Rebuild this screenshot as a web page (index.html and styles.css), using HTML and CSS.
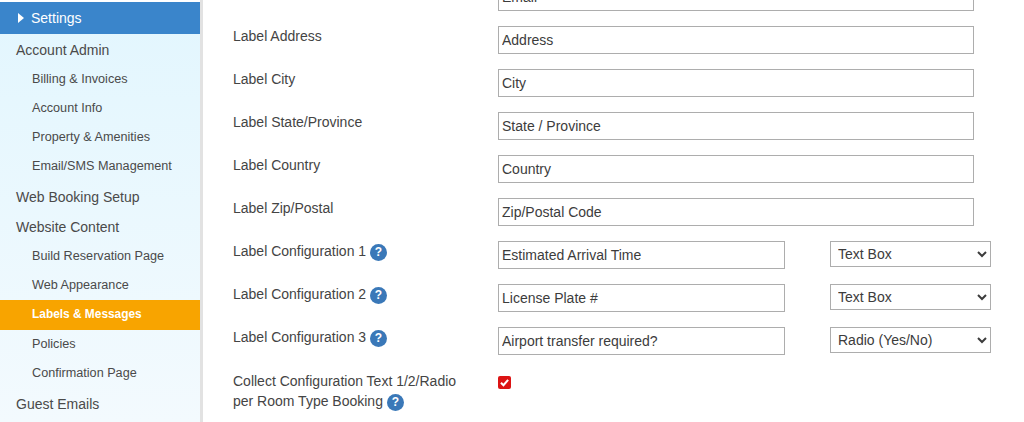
FILE: index.html
```html
<!DOCTYPE html>
<html lang="en">
<head>
<meta charset="utf-8">
<title>Labels &amp; Messages</title>
<link rel="stylesheet" href="styles.css">
</head>
<body>
<div class="page">
  <nav class="sidebar">
    <div class="nav-head"><span class="tri"></span>Settings</div>
    <div class="nav-top">Account Admin</div>
    <div class="nav-sub">Billing &amp; Invoices</div>
    <div class="nav-sub">Account Info</div>
    <div class="nav-sub">Property &amp; Amenities</div>
    <div class="nav-sub">Email/SMS Management</div>
    <div class="nav-top">Web Booking Setup</div>
    <div class="nav-top">Website Content</div>
    <div class="nav-sub">Build Reservation Page</div>
    <div class="nav-sub">Web Appearance</div>
    <div class="nav-sub active">Labels &amp; Messages</div>
    <div class="nav-sub">Policies</div>
    <div class="nav-sub">Confirmation Page</div>
    <div class="nav-top">Guest Emails</div>
  </nav>
  <main class="form">
    <div class="row"><label class="lbl">Label Email</label><input class="txt" value="Email"></div>
    <div class="row"><label class="lbl">Label Address</label><input class="txt" value="Address"></div>
    <div class="row"><label class="lbl">Label City</label><input class="txt" value="City"></div>
    <div class="row"><label class="lbl">Label State/Province</label><input class="txt" value="State / Province"></div>
    <div class="row"><label class="lbl">Label Country</label><input class="txt" value="Country"></div>
    <div class="row"><label class="lbl">Label Zip/Postal</label><input class="txt" value="Zip/Postal Code"></div>
    <div class="row"><label class="lbl">Label Configuration 1 <span class="help">?</span></label><input class="txt short" value="Estimated Arrival Time"><select class="sel"><option>Text Box</option></select></div>
    <div class="row"><label class="lbl">Label Configuration 2 <span class="help">?</span></label><input class="txt short" value="License Plate #"><select class="sel"><option>Text Box</option></select></div>
    <div class="row"><label class="lbl">Label Configuration 3 <span class="help">?</span></label><input class="txt short" value="Airport transfer required?"><select class="sel"><option>Radio (Yes/No)</option></select></div>
    <div class="row"><label class="lbl wide">Collect Configuration Text 1/2/Radio per Room Type Booking <span class="help">?</span></label><span class="check"><svg viewBox="0 0 14 14" width="13" height="13"><path d="M3.2 7.2 5.9 10 10.9 4.2" fill="none" stroke="#fff" stroke-width="2.2"/></svg></span></div>
  </main>
</div>
</body>
</html>
```
FILE: styles.css
```css
* { box-sizing: border-box; }
html, body { margin: 0; height: 422px; overflow: hidden; background: #fff; }
body { font-family: "Liberation Sans", Arial, sans-serif; color: #444; }
.page { display: flex; height: 422px; }
.sidebar {
  width: 203px; flex: none; padding-top: 2px;
  background: linear-gradient(#e2f6fe, #f3fafe);
  border-right: 3px solid #e2e2e2;
  box-shadow: inset 0 2px 0 #fff;
}
.nav-head {
  display: flex; align-items: center; height: 32px; padding-left: 18px;
  background: #3a85cb; color: #fff; font-size: 14px;
}
.tri {
  width: 0; height: 0; margin-right: 7px;
  border-left: 6px solid #fff; border-top: 5px solid transparent; border-bottom: 5px solid transparent;
}
.nav-top { height: 30.5px; padding: 8px 0 0 16px; font-size: 14px; line-height: 16px; color: #4a4a4a; }
.nav-sub { height: 29px; padding-left: 32px; font-size: 12.65px; line-height: 28px; color: #4a4a4a; }
.nav-sub.active { height: 30px; background: #f8a400; color: #fff; font-weight: 700; line-height: 29px; font-size: 11.9px; }
.form { flex: 1; padding: 0 0 0 30px; margin-top: -17px; }
.row { display: flex; align-items: flex-start; height: 43px; }
.lbl { width: 265px; flex: none; font-size: 14px; line-height: 20px; color: #444; }
.lbl.wide { width: 265px; padding: 0 30px 0 0; margin-top: 1px; line-height: 20px; }
.txt {
  width: 476px; height: 28px; padding: 1px 3px; margin: 0;
  border: 1px solid #adadad; border-radius: 0; outline: 0;
  font: 14px "Liberation Sans", Arial, sans-serif; color: #3c3c3c; background: #fff;
}
.txt.short { width: 287px; }
.sel {
  width: 161px; height: 26px; margin: 0 0 0 45px; padding: 0 3px;
  border: 1px solid #adadad; border-radius: 0; background: #fff;
  font: 14px "Liberation Sans", Arial, sans-serif; color: #3c3c3c;
}
.help {
  display: inline-flex; align-items: center; justify-content: center;
  width: 17px; height: 17px; border-radius: 50%;
  background: #3a78b8; color: #fff; font-size: 12px; font-weight: 700; line-height: 17px; vertical-align: 0;
}
.check {
  display: flex; width: 13px; height: 13px; margin-top: 6px;
  background: #dc1414; border-radius: 2px;
}
```
